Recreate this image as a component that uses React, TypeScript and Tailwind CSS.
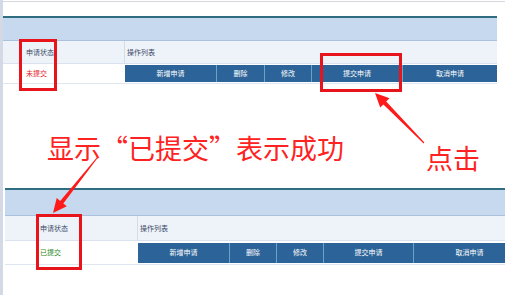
import React from "react";

type Btn = { label: string; w: string };

const bar1: Btn[] = [
  { label: "新增申请", w: "w-[91px]" },
  { label: "删除", w: "w-[48px]" },
  { label: "修改", w: "w-[47px]" },
  { label: "提交申请", w: "w-[91px]" },
  { label: "取消申请", w: "flex-1" },
];

const bar2: Btn[] = [
  { label: "新增申请", w: "w-[91px]" },
  { label: "删除", w: "w-[47px]" },
  { label: "修改", w: "w-[47px]" },
  { label: "提交申请", w: "w-[90px]" },
  { label: "取消申请", w: "flex-1" },
];

function ButtonBar({ items, h }: { items: Btn[]; h: string }) {
  return (
    <div className={`flex ${h} bg-[#2c6398]`}>
      {items.map((b, i) => (
        <div
          key={b.label}
          className={`${b.w} flex items-center justify-center text-[7px] text-white ${
            i > 0 ? "border-l border-[#64a6c8]" : ""
          }`}
        >
          {b.label}
        </div>
      ))}
    </div>
  );
}

function ListTable({
  status,
  statusColor,
  col1,
  pad,
  bandH,
  headH,
  rowH,
  btnH,
  items,
  wrap,
}: {
  status: string;
  statusColor: string;
  col1: string;
  pad: string;
  bandH: string;
  headH: string;
  rowH: string;
  btnH: string;
  items: Btn[];
  wrap: string;
}) {
  return (
    <div className={wrap}>
      <div className="h-[2px] bg-[#2e6e80]" />
      <div className={`${bandH} border-b border-[#a9c1dd] bg-[#c7d9ee]`} />
      <div className={`flex ${headH} border-b border-[#d9e2ee] bg-[#eef3fa] text-[7px] text-[#3b4b66]`}>
        <div className={`${col1} ${pad} flex items-center border-r border-[#d3dcea]`}>申请状态</div>
        <div className="flex items-center pl-[2px]">操作列表</div>
      </div>
      <div className={`flex ${rowH} border-b border-[#dfe6f0] bg-white`}>
        <div className={`${col1} ${pad} flex items-center text-[7px] ${statusColor}`}>{status}</div>
        <div className="flex flex-1 items-center">
          <div className="flex-1">
            <ButtonBar items={items} h={btnH} />
          </div>
        </div>
      </div>
    </div>
  );
}

export default function App() {
  return (
    <div
      className="relative h-[295px] w-[505px] overflow-hidden border-l-[3px] border-[#d3dae5] bg-white"
      style={{ fontFamily: '"Noto Sans CJK SC", "Microsoft YaHei", sans-serif' }}
    >
      <div className="mt-px h-px bg-[#d4d8de]" />
      <div className="h-[14px]" />
      <ListTable
        wrap="w-[494px]"
        status="未提交"
        statusColor="text-[#e8252a]"
        col1="w-[122px]"
        pad="pl-[23px]"
        bandH="h-[23px]"
        headH="h-[23px]"
        rowH="h-[20px]"
        btnH="h-[17px]"
        items={bar1}
      />

      <div className="relative h-[104px] text-[27px] leading-none text-[#ff2222]">
        <div className="absolute left-[44px] top-[50px]">显示“已提交”表示成功</div>
        <div className="absolute left-[423px] top-[60px]">点击</div>
      </div>

      <ListTable
        wrap="ml-[2px] w-[520px]"
        status="已提交"
        statusColor="text-[#2e8b1e]"
        col1="w-[133px]"
        pad="pl-[35px]"
        bandH="h-[26px]"
        headH="h-[25px]"
        rowH="h-[24px]"
        btnH="h-[20px]"
        items={bar2}
      />

      {/* annotation boxes */}
      <div className="absolute left-[16px] top-[39px] h-[52px] w-[38px] border-[3px] border-[#e8141c]" />
      <div className="absolute left-[317px] top-[53px] h-[39px] w-[82px] border-[3px] border-[#e8141c]" />
      <div className="absolute left-[33px] top-[214px] h-[56px] w-[46px] border-[3px] border-[#e8141c]" />

      {/* arrows */}
      <svg className="pointer-events-none absolute left-[-3px] top-0" width="505" height="295" viewBox="0 0 505 295">
        <polygon
          fill="#ff1a1a"
          points="424.4,142.6 386.2,101.6 389.6,98.3 375,93 380.2,107.6 383.4,104.4 423.6,143.4"
        />
        <polygon
          fill="#ff1a1a"
          points="97.4,158.3 63.3,203.4 66.8,206.2 53,213 56.7,198 60.2,200.9 96.6,157.7"
        />
      </svg>
    </div>
  );
}
